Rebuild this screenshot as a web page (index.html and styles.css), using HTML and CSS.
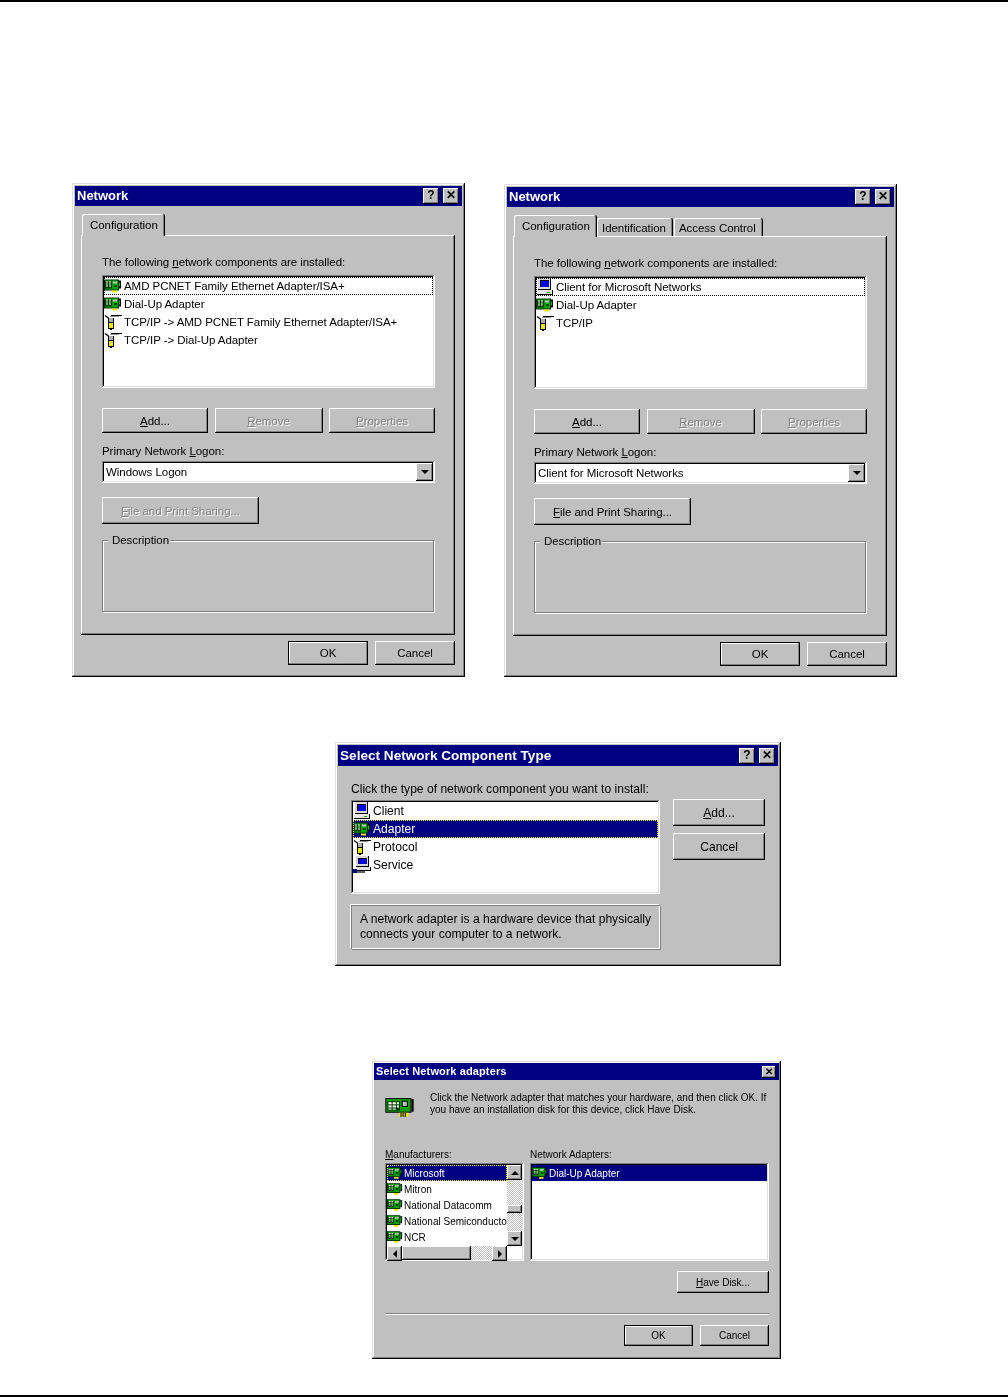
FILE: index.html
```html
<!DOCTYPE html>
<html lang="en">

<head>
    <meta charset="UTF-8">
    <title>Network dialogs</title>
    <link rel="stylesheet" href="styles.css">
</head>

<body>

    <!-- Shared icons -->
    <svg class="defs" aria-hidden="true">
        <symbol id="card" viewBox="0 0 18 15">
            <rect x="0" y="1" width="15" height="11" fill="#003000" />
            <rect x="1" y="2" width="13" height="9" fill="#00a000" />
            <rect x="1" y="3" width="7" height="7" fill="#004000" />
            <rect x="2" y="3" width="2" height="1" fill="#fff" />
            <rect x="5" y="3" width="2" height="1" fill="#fff" />
            <rect x="2" y="5" width="2" height="1" fill="#d0f0d0" />
            <rect x="5" y="5" width="2" height="1" fill="#d0f0d0" />
            <rect x="2" y="7" width="2" height="1" fill="#fff" />
            <rect x="5" y="7" width="2" height="1" fill="#fff" />
            <rect x="9" y="3" width="4" height="2" fill="#c0c0c0" />
            <rect x="10" y="7" width="3" height="1" fill="#000" />
            <rect x="15" y="2" width="2" height="8" fill="#000" />
            <rect x="15" y="4" width="1" height="4" fill="#00c000" />
            <rect x="8" y="12" width="5" height="2" fill="#e8e800" />
        </symbol>
        <symbol id="plug" viewBox="0 0 18 18">
            <path d="M1 2.5l4 3" stroke="#000" stroke-width="1.4" fill="none" />
            <path d="M7 2.5h11" stroke="#000" stroke-width="1" fill="none" />
            <path d="M6 3.5h9" stroke="#909090" stroke-width="1" fill="none" />
            <rect x="4" y="5" width="6" height="5" fill="#000" />
            <rect x="5" y="5" width="4" height="4" fill="#b0b0b0" />
            <rect x="4" y="9" width="6" height="7" fill="#000" />
            <rect x="5" y="10" width="4" height="5" fill="#e8e800" />
            <rect x="6" y="16" width="2" height="1" fill="#000" />
        </symbol>
        <symbol id="pc" viewBox="0 0 18 18">
            <rect x="2" y="0" width="13" height="12" fill="#000" />
            <rect x="2" y="0" width="12" height="11" fill="#d8d8d8" />
            <rect x="4" y="2" width="9" height="7" fill="#000" />
            <rect x="5" y="3" width="8" height="6" fill="#0000e0" />
            <rect x="1" y="12" width="16" height="5" fill="#000" />
            <rect x="1" y="12" width="15" height="4" fill="#e8e8e8" />
            <rect x="11" y="14" width="3" height="1" fill="#00a000" />
        </symbol>
        <symbol id="service" viewBox="0 0 18 18">
            <rect x="3" y="0" width="13" height="11" fill="#000" />
            <rect x="3" y="0" width="12" height="10" fill="#d8d8d8" />
            <rect x="5" y="2" width="9" height="6" fill="#000" />
            <rect x="6" y="3" width="8" height="5" fill="#0000e0" />
            <rect x="3" y="11" width="15" height="4" fill="#000" />
            <rect x="3" y="11" width="14" height="3" fill="#e0e0e0" />
            <rect x="0" y="13" width="4" height="4" fill="#000080" />
            <rect x="4" y="15" width="8" height="2" fill="#606060" />
        </symbol>
    </svg>

    <div class="page">

        <!-- Network dialogs -->
        <div class="row-network">
            <div class="win net-win">
                <div class="title">
                    <span>Network</span>
                    <div class="title-btns">
                        <span class="cap-btn">?</span>
                        <span class="cap-btn">&#10005;</span>
                    </div>
                </div>
                <div class="tabs">
                    <div class="tab tab-active">Configuration</div>
                </div>
                <div class="panel">
                    <p class="label">The following <u>n</u>etwork components are installed:</p>
                    <div class="list net-list">
                        <div class="item focus"><svg class="ico"><use href="#card" /></svg>AMD PCNET Family Ethernet Adapter/ISA+</div>
                        <div class="item"><svg class="ico"><use href="#card" /></svg>Dial-Up Adapter</div>
                        <div class="item"><svg class="ico"><use href="#plug" /></svg>TCP/IP -&gt; AMD PCNET Family Ethernet Adapter/ISA+</div>
                        <div class="item"><svg class="ico"><use href="#plug" /></svg>TCP/IP -&gt; Dial-Up Adapter</div>
                    </div>
                    <div class="btn-row">
                        <div class="btn btn-add"><span><u>A</u>dd...</span></div>
                        <div class="btn btn-remove off"><span><u>R</u>emove</span></div>
                        <div class="btn btn-props off"><span><u>P</u>roperties</span></div>
                    </div>
                    <p class="label label-logon">Primary Network <u>L</u>ogon:</p>
                    <div class="combo">
                        <span>Windows Logon</span>
                        <div class="combo-arrow"><i class="arrow-down"></i></div>
                    </div>
                    <div class="btn btn-share off"><span><u>F</u>ile and Print Sharing...</span></div>
                    <div class="group"><span class="legend">Description</span></div>
                </div>
                <div class="footer">
                    <div class="btn btn-foot btn-default"><span>OK</span></div>
                    <div class="btn btn-foot"><span>Cancel</span></div>
                </div>
            </div>

            <div class="win net-win net-win-2">
                <div class="title">
                    <span>Network</span>
                    <div class="title-btns">
                        <span class="cap-btn">?</span>
                        <span class="cap-btn">&#10005;</span>
                    </div>
                </div>
                <div class="tabs">
                    <div class="tab tab-active">Configuration</div>
                    <div class="tab tab-id">Identification</div>
                    <div class="tab tab-access">Access Control</div>
                </div>
                <div class="panel">
                    <p class="label">The following <u>n</u>etwork components are installed:</p>
                    <div class="list net-list">
                        <div class="item focus"><svg class="ico"><use href="#pc" /></svg>Client for Microsoft Networks</div>
                        <div class="item"><svg class="ico"><use href="#card" /></svg>Dial-Up Adapter</div>
                        <div class="item"><svg class="ico"><use href="#plug" /></svg>TCP/IP</div>
                    </div>
                    <div class="btn-row">
                        <div class="btn btn-add"><span><u>A</u>dd...</span></div>
                        <div class="btn btn-remove off"><span><u>R</u>emove</span></div>
                        <div class="btn btn-props off"><span><u>P</u>roperties</span></div>
                    </div>
                    <p class="label label-logon">Primary Network <u>L</u>ogon:</p>
                    <div class="combo">
                        <span>Client for Microsoft Networks</span>
                        <div class="combo-arrow"><i class="arrow-down"></i></div>
                    </div>
                    <div class="btn btn-share"><span><u>F</u>ile and Print Sharing...</span></div>
                    <div class="group"><span class="legend">Description</span></div>
                </div>
                <div class="footer">
                    <div class="btn btn-foot btn-default"><span>OK</span></div>
                    <div class="btn btn-foot"><span>Cancel</span></div>
                </div>
            </div>
        </div>

        <!-- Select Network Component Type -->
        <div class="win type-win">
            <div class="title">
                <span>Select Network Component Type</span>
                <div class="title-btns">
                    <span class="cap-btn">?</span>
                    <span class="cap-btn">&#10005;</span>
                </div>
            </div>
            <div class="type-body">
                <div class="type-main">
                    <p class="label">Click the type of network component you want to install:</p>
                    <div class="list type-list">
                        <div class="item"><svg class="ico"><use href="#pc" /></svg>Client</div>
                        <div class="item selected"><svg class="ico"><use href="#card" /></svg>Adapter</div>
                        <div class="item"><svg class="ico"><use href="#plug" /></svg>Protocol</div>
                        <div class="item"><svg class="ico"><use href="#service" /></svg>Service</div>
                    </div>
                    <div class="type-desc">A network adapter is a hardware device that physically connects your computer to a network.</div>
                </div>
                <div class="type-side">
                    <div class="btn btn-side"><span><u>A</u>dd...</span></div>
                    <div class="btn btn-side"><span>Cancel</span></div>
                </div>
            </div>
        </div>

        <!-- Select Network adapters -->
        <div class="win adapt-win">
            <div class="title title-small">
                <span>Select Network adapters</span>
                <div class="title-btns">
                    <span class="cap-btn">&#10005;</span>
                </div>
            </div>
            <div class="adapt-intro">
                <svg class="ico-big" viewBox="0 0 28 20">
                    <rect x="0" y="1" width="25" height="14" fill="#000" />
                    <rect x="1" y="2" width="23" height="12" fill="#10a010" />
                    <rect x="2" y="4" width="12" height="9" fill="#004000" />
                    <rect x="3" y="5" width="3" height="2" fill="#fff" />
                    <rect x="7" y="5" width="3" height="2" fill="#fff" />
                    <rect x="11" y="5" width="2" height="2" fill="#fff" />
                    <rect x="3" y="8" width="3" height="2" fill="#fff" />
                    <rect x="7" y="8" width="3" height="2" fill="#fff" />
                    <rect x="11" y="8" width="2" height="2" fill="#fff" />
                    <rect x="3" y="11" width="3" height="1" fill="#fff" />
                    <rect x="7" y="11" width="3" height="1" fill="#fff" />
                    <rect x="16" y="4" width="5" height="5" fill="#c0c0c0" stroke="#000" />
                    <rect x="25" y="2" width="2" height="12" fill="#000" />
                    <rect x="13" y="15" width="9" height="4" fill="#e8e800" />
                    <path d="M15 15v4M17 15v4M19 15v4" stroke="#000" />
                </svg>
                <p class="adapt-text">Click the Network adapter that matches your hardware, and then click OK. If you have an installation disk for this device, click Have Disk.</p>
            </div>
            <div class="adapt-lists">
                <div class="adapt-col-left">
                    <p class="label-small"><u>M</u>anufacturers:</p>
                    <div class="list maker-list">
                        <div class="maker-rows">
                            <div class="maker-items">
                                <div class="item item-small selected"><svg class="ico-small"><use href="#card" /></svg>Microsoft</div>
                                <div class="item item-small"><svg class="ico-small"><use href="#card" /></svg>Mitron</div>
                                <div class="item item-small"><svg class="ico-small"><use href="#card" /></svg>National Datacomm</div>
                                <div class="item item-small"><svg class="ico-small"><use href="#card" /></svg>National Semiconductor</div>
                                <div class="item item-small"><svg class="ico-small"><use href="#card" /></svg>NCR</div>
                            </div>
                            <div class="vscroll">
                                <div class="sb-btn"><i class="arrow-up"></i></div>
                                <div class="sb-track sb-track-top"></div>
                                <div class="sb-thumb"></div>
                                <div class="sb-track"></div>
                                <div class="sb-btn"><i class="arrow-down"></i></div>
                            </div>
                        </div>
                        <div class="hscroll">
                            <div class="sb-btn"><i class="arrow-left"></i></div>
                            <div class="sb-hthumb"></div>
                            <div class="sb-track"></div>
                            <div class="sb-btn"><i class="arrow-right"></i></div>
                        </div>
                    </div>
                </div>
                <div class="adapt-col-right">
                    <p class="label-small">Network Adapters:</p>
                    <div class="list model-list">
                        <div class="item item-small item-plain"><svg class="ico-small"><use href="#card" /></svg>Dial-Up Adapter</div>
                    </div>
                </div>
            </div>
            <div class="adapt-disk">
                <div class="btn btn-small btn-disk"><span><u>H</u>ave Disk...</span></div>
            </div>
            <div class="separator"></div>
            <div class="adapt-foot">
                <div class="btn btn-small btn-default"><span>OK</span></div>
                <div class="btn btn-small"><span>Cancel</span></div>
            </div>
        </div>

    </div>

</body>

</html>
```

FILE: styles.css
```css
/* Basic reset */
* {
    margin: 0;
    padding: 0;
    box-sizing: border-box;
}

body {
    background-color: #fff;
    font-family: "Liberation Sans", Arial, sans-serif;
    color: #000;
}

.defs {
    position: absolute;
    width: 0;
    height: 0;
}

/* Page with rules top and bottom */
.page {
    height: 1397px;
    border-top: 2px solid #000;
    border-bottom: 2px solid #000;
    overflow: hidden;
}

.row-network {
    display: flex;
    align-items: flex-start;
    gap: 39px;
    margin: 181px 0 0 72px;
}

/* Window frame */
.win {
    background-color: #c0c0c0;
    padding: 3px;
    font-size: 11.5px;
    letter-spacing: -0.05px;
    box-shadow: inset -1px -1px #000, inset 1px 1px #dfdfdf, inset -2px -2px #808080, inset 2px 2px #fff;
    filter: blur(0.4px);
}

.title {
    height: 20px;
    background-color: #000080;
    color: #fff;
    font-weight: bold;
    font-size: 13px;
    letter-spacing: 0;
    padding: 0 3px 0 2px;
    display: flex;
    justify-content: space-between;
    align-items: center;
}

.title > span {
    margin-bottom: 2px;
}

.title-btns {
    display: flex;
    gap: 4px;
}

.cap-btn {
    width: 16px;
    height: 16px;
    background-color: #c0c0c0;
    color: #000;
    font-size: 12px;
    font-weight: bold;
    line-height: 15px;
    text-align: center;
    box-shadow: inset -1px -1px #000, inset 1px 1px #fff, inset -2px -2px #808080;
}

/* Buttons */
.btn {
    background-color: #c0c0c0;
    display: flex;
    align-items: center;
    justify-content: center;
    box-shadow: inset -1px -1px #000, inset 1px 1px #fff, inset -2px -2px #808080;
}

.btn-default {
    box-shadow: inset 0 0 0 1px #000, inset -2px -2px #808080, inset 2px 2px #fff;
}

.off {
    color: #808080;
    text-shadow: 1px 1px 0 #fff;
}

/* Sunken list */
.list {
    background-color: #fff;
    box-shadow: inset -1px -1px #fff, inset 1px 1px #808080, inset -2px -2px #dfdfdf, inset 2px 2px #000;
    padding: 2px;
}

.item {
    height: 18px;
    display: flex;
    align-items: center;
    gap: 2px;
    white-space: nowrap;
}

.ico {
    width: 18px;
    height: 18px;
    flex-shrink: 0;
}

.focus {
    outline: 1px dotted #000;
    outline-offset: -1px;
}

.selected {
    background-color: #000080;
    color: #fff;
    outline: 1px dotted #ff0;
    outline-offset: -1px;
}

/* Network dialogs */
.net-win {
    width: 393px;
    height: 494px;
}

.net-win-2 {
    margin-top: 1px;
    height: 493px;
}

.tabs {
    display: flex;
    align-items: flex-end;
    height: 21px;
    margin: 8px 0 0 7px;
    position: relative;
    z-index: 1;
}

.tab {
    height: 18px;
    line-height: 21px;
    padding: 0 5px;
    background-color: #c0c0c0;
    border-radius: 2px 2px 0 0;
    box-shadow: inset -1px 0 #000, inset 1px 1px #fff, inset -2px 0 #808080;
    white-space: nowrap;
}

.tab-active {
    width: 83px;
    height: 22px;
    line-height: 22px;
    padding: 0 0 0 8px;
    margin-bottom: -1px;
}

.tab-id {
    width: 76px;
}

.tab-access {
    width: 89px;
    margin-left: 1px;
}

.panel {
    width: 374px;
    height: 400px;
    margin-left: 6px;
    padding: 20px 0 0 21px;
    box-shadow: inset -1px -1px #000, inset 1px 1px #fff, inset -2px -2px #808080;
}

.label {
    height: 14px;
    line-height: 14px;
    white-space: nowrap;
}

.net-list {
    width: 333px;
    height: 113px;
    margin-top: 6px;
}

.btn-row {
    display: flex;
    width: 333px;
    height: 25px;
    margin-top: 20px;
    justify-content: space-between;
}

.btn-add {
    width: 106px;
}

.btn-remove {
    width: 108px;
}

.btn-props {
    width: 106px;
}

.label-logon {
    margin-top: 11px;
}

.combo {
    width: 333px;
    height: 22px;
    margin-top: 3px;
    background-color: #fff;
    padding: 2px 2px 2px 4px;
    display: flex;
    justify-content: space-between;
    align-items: center;
    box-shadow: inset -1px -1px #fff, inset 1px 1px #808080, inset -2px -2px #dfdfdf, inset 2px 2px #000;
}

.combo-arrow {
    width: 17px;
    height: 18px;
    background-color: #c0c0c0;
    display: flex;
    align-items: center;
    justify-content: center;
    box-shadow: inset -1px -1px #000, inset 1px 1px #fff, inset -2px -2px #808080;
}

.arrow-down {
    border: 4px solid transparent;
    border-top-color: #000;
    border-bottom-width: 0;
}

.arrow-up {
    border: 4px solid transparent;
    border-bottom-color: #000;
    border-top-width: 0;
}

.arrow-left {
    border: 4px solid transparent;
    border-right-color: #000;
    border-left-width: 0;
}

.arrow-right {
    border: 4px solid transparent;
    border-left-color: #000;
    border-right-width: 0;
}

.btn-share {
    width: 157px;
    height: 27px;
    margin-top: 14px;
}

.group {
    width: 332px;
    height: 72px;
    margin-top: 16px;
    border: 1px solid #808080;
    box-shadow: 1px 1px #fff, inset 1px 1px #fff;
    padding-left: 5px;
}

.legend {
    display: block;
    width: fit-content;
    height: 14px;
    line-height: 14px;
    margin-top: -8px;
    padding: 0 1px 0 4px;
    background-color: #c0c0c0;
}

.footer {
    display: flex;
    justify-content: flex-end;
    gap: 7px;
    margin-top: 6px;
    padding-right: 7px;
}

.btn-foot {
    width: 80px;
    height: 24px;
}

/* Select Network Component Type */
.type-win {
    width: 446px;
    height: 224px;
    margin: 65px 0 0 335px;
    font-size: 12.1px;
    letter-spacing: 0;
}

.type-win .title {
    height: 21px;
    font-size: 13.6px;
}

.type-win .title > span {
    margin-bottom: 0;
}

.type-body {
    display: flex;
    padding: 16px 0 0 13px;
    gap: 13px;
}

.type-main {
    width: 309px;
}

.type-list {
    width: 309px;
    height: 94px;
    margin-top: 4px;
}

.type-desc {
    height: 44px;
    margin-top: 11px;
    padding: 7px 0 0 9px;
    line-height: 15px;
    box-shadow: inset 1px 1px #808080, inset -1px -1px #fff, 1px 1px #808080, -1px -1px #fff;
}

.type-side {
    display: flex;
    flex-direction: column;
    gap: 7px;
    padding-top: 17px;
}

.btn-side {
    width: 92px;
    height: 27px;
}

/* Select Network adapters */
.adapt-win {
    width: 409px;
    height: 298px;
    margin: 95px 0 0 372px;
    padding: 2px;
    font-size: 10px;
    letter-spacing: 0;
}

.title-small {
    height: 17px;
    font-size: 11px;
    letter-spacing: 0.12px;
    padding-right: 3px;
}

.title-small .cap-btn {
    width: 14px;
    height: 12px;
    font-size: 10px;
    line-height: 11px;
}

.adapt-intro {
    display: flex;
    padding: 12px 0 0 11px;
    height: 65px;
}

.ico-big {
    width: 30px;
    height: 21px;
    margin-top: 5px;
    flex-shrink: 0;
}

.adapt-text {
    margin-left: 15px;
    width: 340px;
    line-height: 12px;
}

.adapt-lists {
    display: flex;
    padding: 3px 0 0 11px;
    gap: 6px;
}

.label-small {
    height: 13px;
    line-height: 13px;
    white-space: nowrap;
}

.maker-list {
    width: 139px;
    height: 98px;
    margin-top: 2px;
    padding: 2px;
}

.maker-rows {
    display: flex;
    height: 81px;
}

.maker-items {
    width: 120px;
    overflow: hidden;
}

.item-small {
    height: 16px;
    gap: 0;
}

.item-plain {
    outline: none;
    background-color: #000080;
    color: #fff;
}

.ico-small {
    width: 16px;
    height: 14px;
    margin-right: 1px;
    flex-shrink: 0;
}

.vscroll {
    width: 15px;
    display: flex;
    flex-direction: column;
}

.sb-btn {
    width: 15px;
    height: 15px;
    flex-shrink: 0;
    background-color: #c0c0c0;
    display: flex;
    align-items: center;
    justify-content: center;
    box-shadow: inset -1px -1px #000, inset 1px 1px #fff, inset -2px -2px #808080;
}

.sb-track {
    flex: 1;
    background: repeating-conic-gradient(#fff 0 25%, #c0c0c0 0 50%) 0 0 / 2px 2px;
}

.sb-track-top {
    flex: none;
    height: 25px;
}

.sb-thumb {
    height: 8px;
    background-color: #c0c0c0;
    box-shadow: inset -1px -1px #000, inset 1px 1px #fff, inset -2px -2px #808080;
}

.hscroll {
    display: flex;
    width: 120px;
    height: 14px;
}

.sb-hthumb {
    width: 69px;
    background-color: #c0c0c0;
    box-shadow: inset -1px -1px #000, inset 1px 1px #fff, inset -2px -2px #808080;
}

.model-list {
    width: 239px;
    height: 98px;
    margin-top: 2px;
}

.adapt-disk {
    display: flex;
    justify-content: flex-end;
    padding: 10px 10px 0 0;
}

.btn-small {
    width: 69px;
    height: 21px;
}

.btn-disk {
    width: 92px;
    height: 22px;
}

.separator {
    height: 2px;
    margin: 20px 10px 0 11px;
    background-color: #808080;
    border-bottom: 1px solid #fff;
}

.adapt-foot {
    display: flex;
    justify-content: flex-end;
    gap: 7px;
    padding: 10px 10px 0 0;
}
```
